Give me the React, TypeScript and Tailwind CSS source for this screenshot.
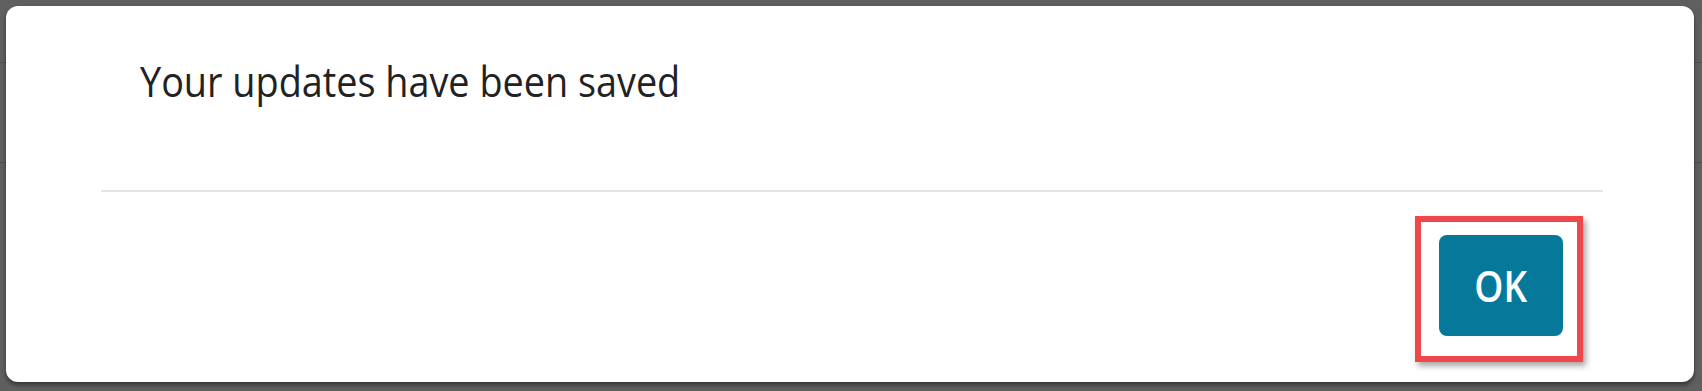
import React from 'react'

function OkButton() {
  return (
    // red highlight frame around the action
    <div className="border-[6px] border-[#f0474a] pt-[13px] pl-[18px] pr-[14px] pb-[20px] shadow-[3px_4px_6px_rgba(0,0,0,0.35)]">
      <button
        type="button"
        className="flex h-[101px] w-[124px] items-center justify-center rounded-[8px] bg-[#06799b] text-white"
      >
        <span className="origin-center scale-x-[0.86] text-[43px] font-semibold leading-none">OK</span>
      </button>
    </div>
  )
}

export default function App() {
  return (
    <div
      className="relative h-[391px] w-full overflow-hidden bg-[#5f5f5f]"
      style={{ fontFamily: '"Open Sans", "Noto Sans", sans-serif' }}
    >
      {/* page behind the overlay */}
      <div className="h-[63px] border-b border-[#4f4f4f]" />
      <div className="h-[100px] border-b border-[#4f4f4f]" />

      {/* dialog */}
      <div className="absolute top-[6px] left-[6px] right-[8px] bottom-[9px] flex flex-col rounded-[12px] bg-white shadow-[0_3px_4px_rgba(0,0,0,0.45)]">
        <div className="pt-[54px] pl-[134px]">
          <p className="origin-left scale-x-[0.9] text-[42px] leading-none text-[#222]">
            Your updates have been saved
          </p>
        </div>

        <div className="mt-[88px] ml-[95px] mr-[91px] h-[2px] bg-[#e3e3e3]" />

        <div className="mt-[24px] ml-[95px] mr-[111px] flex justify-end">
          <OkButton />
        </div>
      </div>
    </div>
  )
}
